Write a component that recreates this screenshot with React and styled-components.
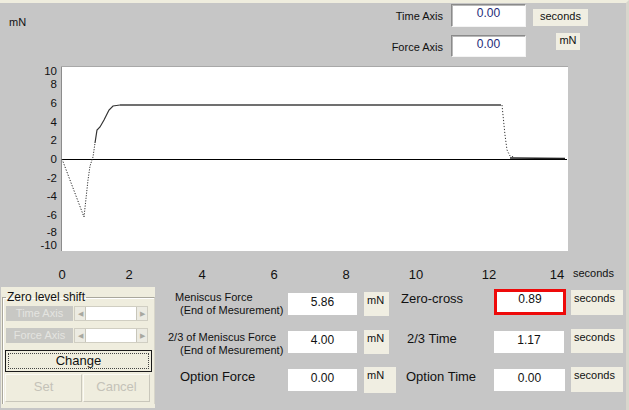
import React from 'react';
import styled, { createGlobalStyle } from 'styled-components';

const GlobalStyle = createGlobalStyle`
  html, body {
    margin: 0;
    padding: 0;
    background: #c6c6c6;
  }
  body {
    font-family: "Liberation Sans", Arial, sans-serif;
    color: #111;
  }
`;

const Window = styled.div`
  width: 629px;
  height: 410px;
  box-sizing: border-box;
  background: #c6c6c6;
  border-top: 3px solid #efedde;
  border-right: 3px solid #d8d6cc;
  overflow: hidden;
  display: flex;
  flex-direction: column;
`;

const Header = styled.div`
  height: 57px;
  display: flex;
  align-items: flex-start;
`;

const UnitLabel = styled.div`
  margin: 13px 0 0 9px;
  font-size: 11px;
`;

const AxisPanel = styled.div`
  margin: 1px 38px 0 auto;
  display: grid;
  grid-template-columns: 60px 75px 55px;
  grid-template-rows: 23px 22px;
  column-gap: 7px;
  row-gap: 8px;
`;

const AxisName = styled.div`
  font-size: 11px;
  text-align: right;
  align-self: center;
  margin-top: ${(p) => p.$dy || 0}px;
  padding-right: 1px;
`;

const AxisField = styled.div`
  box-sizing: border-box;
  background: #fff;
  border: 1px solid;
  border-color: #8a8a8a #f4f4f4 #f4f4f4 #8a8a8a;
  box-shadow: inset 1px 1px 0 #b8b8b8;
  font-size: 12px;
  color: #1d2a78;
  text-align: center;
  padding-top: 1px;
`;

const UnitBox = styled.div`
  box-sizing: border-box;
  background: #f0eee2;
  font-size: 11px;
  width: ${(p) => p.$w}px;
  height: ${(p) => p.$h}px;
  margin-top: ${(p) => p.$dy || 0}px;
  margin-left: ${(p) => p.$dx || 0}px;
  padding: ${(p) => (p.$center ? '1px 0 0 0' : '2px 0 0 3px')};
  text-align: ${(p) => (p.$center ? 'center' : 'left')};
`;

const ChartSvg = styled.svg`
  display: block;
  width: 626px;
  height: 225px;
  font-family: "Liberation Sans", Arial, sans-serif;
`;

const Bottom = styled.div`
  flex: 1;
  display: flex;
  align-items: flex-start;
`;

const GroupPanel = styled.div`
  margin: 2px 0 0 1px;
  width: 154px;
  height: 121px;
  box-sizing: border-box;
  background: #efedde;
  padding-top: 3px;
`;

const GroupBox = styled.fieldset`
  margin: 0 1px;
  padding: 2px 2px 0 2px;
  height: 114px;
  box-sizing: border-box;
  border: 1px solid #a9a79c;
  border-right-color: #d8d6ca;
  border-bottom: none;
  box-shadow: inset 1px 1px 0 #fff;
  legend {
    font-size: 12px;
    padding: 0 1px;
    margin-left: 1px;
    line-height: 14px;
  }
`;

const ShiftRow = styled.div`
  display: flex;
  height: 15px;
  margin-bottom: ${(p) => p.$mb}px;
  margin-left: 1px;
`;

const GhostButton = styled.div`
  width: 67px;
  box-sizing: border-box;
  background: #c8c8c4;
  color: #e4e4e0;
  font-size: 11px;
  text-align: center;
  line-height: 15px;
`;

const Scroll = styled.div`
  margin-left: 1px;
  width: 74px;
  display: flex;
  box-sizing: border-box;
  border: 1px solid #d0cec2;
  background: #fff;
`;

const ScrollArrow = styled.div`
  width: 10px;
  background: #ecebe2;
  border-right: ${(p) => (p.$left ? '1px solid #c8c6ba' : 'none')};
  border-left: ${(p) => (p.$left ? 'none' : '1px solid #c8c6ba')};
  display: flex;
  align-items: center;
  justify-content: center;
  color: #a8a8a0;
  font-size: 7px;
`;

const ScrollTrack = styled.div`
  flex: 1;
`;

const ChangeButton = styled.div`
  width: 147px;
  height: 22px;
  box-sizing: border-box;
  border: 1px solid #1a1a1a;
  padding: 2px;
  background: #efedde;
  span {
    display: block;
    height: 100%;
    box-sizing: border-box;
    border: 1px dotted #444;
    font-size: 13px;
    line-height: 14px;
    text-align: center;
  }
`;

const ButtonPair = styled.div`
  display: flex;
  margin-top: 2px;
`;

const DimButton = styled.div`
  width: ${(p) => p.$w}px;
  height: 28px;
  box-sizing: border-box;
  margin-right: 1px;
  background: #efedde;
  border: 1px solid;
  border-color: #fbfaf4 #c9c7bb #c9c7bb #fbfaf4;
  color: #c4c2b8;
  font-size: 13px;
  text-align: center;
  line-height: 24px;
`;

const Results = styled.div`
  margin: 5px 0 0 10px;
  display: grid;
  grid-template-columns: 123px 76px 32px 98px 77px 52px;
  grid-auto-rows: 26px;
  row-gap: 12px;
`;

const Caption = styled.div`
  padding-top: ${(p) => p.$pt || 0}px;
`;

const CaptionLine = styled.div`
  font-size: ${(p) => (p.$big ? 13 : 11)}px;
  line-height: ${(p) => (p.$big ? 16 : 13)}px;
  padding-left: ${(p) => p.$indent}px;
  white-space: nowrap;
`;

const Value = styled.div`
  box-sizing: border-box;
  width: ${(p) => p.$w}px;
  height: ${(p) => (p.$alert ? 26 : 22)}px;
  margin-top: ${(p) => (p.$alert ? -1 : 3)}px;
  background: #fff;
  border: ${(p) => (p.$alert ? '3px solid #ee0a0a' : 'none')};
  font-size: 12px;
  text-align: center;
  padding-top: ${(p) => (p.$alert ? 0 : 2)}px;
`;

const yTicks = [
  ['10', 71], ['8', 84], ['6', 103], ['4', 122], ['2', 140], ['0', 159],
  ['-2', 178], ['-4', 196], ['-6', 215], ['-8', 232], ['-10', 245],
];

const xTicks = [
  ['0', 62], ['2', 129], ['4', 202], ['6', 274], ['8', 346],
  ['10', 416], ['12', 489], ['14', 557],
];

const Chart = () => (
  <ChartSvg viewBox="0 60 626 225">
    <rect x="62" y="67" width="506" height="184" fill="#fff" />
    <line x1="61.5" y1="66" x2="61.5" y2="251" stroke="#8c8c8c" />
    <line x1="61" y1="66.5" x2="568" y2="66.5" stroke="#a8a8a8" />
    <line x1="62" y1="159.5" x2="567" y2="159.5" stroke="#000" />
    <path d="M62 159 L84 217" fill="none" stroke="#222" strokeDasharray="1.2 1.6" />
    <path d="M84 217 L88 180 L90 166 L93 157 L95 143" fill="none" stroke="#333" strokeDasharray="1.2 1.4" />
    <path d="M95 143 L97 130 L100 127 L104 120 L109 110 L113 106 L120 105" fill="none" stroke="#333" strokeWidth="1.2" />
    <path d="M120 105 L501 105" fill="none" stroke="#707070" strokeWidth="2" />
    <path d="M502 105 L505 135 L507 150 L510 156 L514 157" fill="none" stroke="#333" strokeDasharray="1.2 1.8" />
    <path d="M510 158 L565 158.5" fill="none" stroke="#222" strokeWidth="1.6" />
    {yTicks.map(([t, y]) => (
      <text key={t} x="57" y={y} fontSize="11.5" textAnchor="end" dominantBaseline="central" fill="#111">
        {t}
      </text>
    ))}
    {xTicks.map(([t, x]) => (
      <text key={t} x={x} y="274" fontSize="13" textAnchor="middle" dominantBaseline="central" fill="#111">
        {t}
      </text>
    ))}
    <text x="573" y="273" fontSize="11" dominantBaseline="central" fill="#111">seconds</text>
  </ChartSvg>
);

const App = () => (
  <>
    <GlobalStyle />
    <Window>
      <Header>
        <UnitLabel>mN</UnitLabel>
        <AxisPanel>
          <AxisName>Time Axis</AxisName>
          <AxisField>0.00</AxisField>
          <UnitBox $w={55} $h={17} $dy={5} $center>seconds</UnitBox>
          <AxisName $dy={2}>Force Axis</AxisName>
          <AxisField>0.00</AxisField>
          <UnitBox $w={24} $h={17} $dy={-2} $dx={23} $center>mN</UnitBox>
        </AxisPanel>
      </Header>

      <Chart />

      <Bottom>
        <GroupPanel>
          <GroupBox>
            <legend>Zero level shift</legend>
            <ShiftRow $mb={7}>
              <GhostButton>Time Axis</GhostButton>
              <Scroll>
                <ScrollArrow $left>◀</ScrollArrow>
                <ScrollTrack />
                <ScrollArrow>▶</ScrollArrow>
              </Scroll>
            </ShiftRow>
            <ShiftRow $mb={7}>
              <GhostButton>Force Axis</GhostButton>
              <Scroll>
                <ScrollArrow $left>◀</ScrollArrow>
                <ScrollTrack />
                <ScrollArrow>▶</ScrollArrow>
              </Scroll>
            </ShiftRow>
            <ChangeButton>
              <span>Change</span>
            </ChangeButton>
            <ButtonPair>
              <DimButton $w={77}>Set</DimButton>
              <DimButton $w={67}>Cancel</DimButton>
            </ButtonPair>
          </GroupBox>
        </GroupPanel>

        <Results>
          <Caption $pt={1}>
            <CaptionLine $indent={10}>Meniscus Force</CaptionLine>
            <CaptionLine $indent={15}>(End of Mesurement)</CaptionLine>
          </Caption>
          <Value $w={69}>5.86</Value>
          <UnitBox $w={25} $h={24} $dy={2}>mN</UnitBox>
          <Caption $pt={1}>
            <CaptionLine $big $indent={5}>Zero-cross</CaptionLine>
          </Caption>
          <Value $w={72} $alert>0.89</Value>
          <UnitBox $w={52} $h={25} $dy={0}>seconds</UnitBox>

          <Caption $pt={3}>
            <CaptionLine $indent={3}>2/3 of Meniscus Force</CaptionLine>
            <CaptionLine $indent={15}>(End of Mesurement)</CaptionLine>
          </Caption>
          <Value $w={69}>4.00</Value>
          <UnitBox $w={25} $h={24} $dy={2}>mN</UnitBox>
          <Caption $pt={3}>
            <CaptionLine $big $indent={11}>2/3 Time</CaptionLine>
          </Caption>
          <Value $w={70}>1.17</Value>
          <UnitBox $w={52} $h={24} $dy={1}>seconds</UnitBox>

          <Caption $pt={3}>
            <CaptionLine $big $indent={15}>Option Force</CaptionLine>
          </Caption>
          <Value $w={69}>0.00</Value>
          <UnitBox $w={32} $h={26} $dy={1}>mN</UnitBox>
          <Caption $pt={3}>
            <CaptionLine $big $indent={10}>Option Time</CaptionLine>
          </Caption>
          <Value $w={71}>0.00</Value>
          <UnitBox $w={52} $h={25} $dy={1}>seconds</UnitBox>
        </Results>
      </Bottom>
    </Window>
  </>
);

export default App;
